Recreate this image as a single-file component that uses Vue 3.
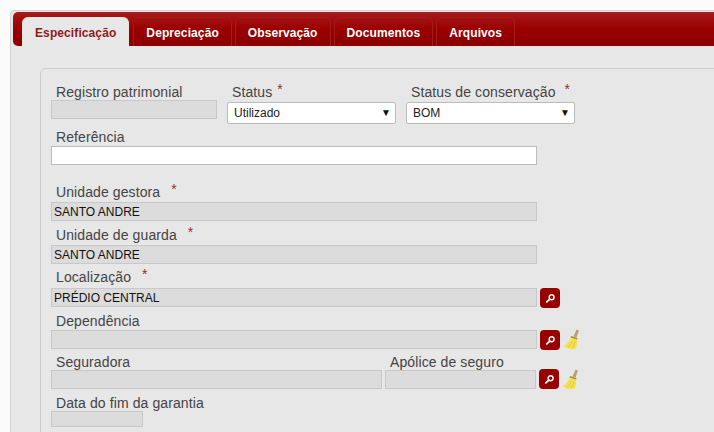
<script setup>
const tabs = ['Depreciação', 'Observação', 'Documentos', 'Arquivos']
</script>

<template>
  <div class="page">
    <div class="panel">
      <ul class="tabbar">
        <li class="tab active">Especificação</li>
        <li v-for="t in tabs" :key="t" class="tab">{{ t }}</li>
      </ul>

      <div class="form">
        <div class="row first">
          <div class="field f-reg">
            <label>Registro patrimonial</label>
            <div class="ro reg"></div>
          </div>
          <div class="field f-status">
            <label>Status <i class="near">*</i></label>
            <div class="sel">Utilizado<b>▼</b></div>
          </div>
          <div class="field f-cons">
            <label>Status de conservação <i class="mid">*</i></label>
            <div class="sel">BOM<b>▼</b></div>
          </div>
        </div>

        <div class="field f-ref">
          <label>Referência</label>
          <div class="txt"></div>
        </div>

        <div class="field f-ug">
          <label>Unidade gestora <i>*</i></label>
          <div class="ro long">SANTO ANDRE</div>
        </div>
        <div class="field f-ug2">
          <label>Unidade de guarda <i>*</i></label>
          <div class="ro long">SANTO ANDRE</div>
        </div>
        <div class="field f-loc">
          <label>Localização <i>*</i></label>
          <div class="line">
            <div class="ro long">PRÉDIO CENTRAL</div>
            <button class="search">
              <svg viewBox="0 0 12 12" width="11" height="11"><circle cx="7.2" cy="4.6" r="2.7" fill="none" stroke="#fff" stroke-width="1.5"/><path d="M5.2 6.6 2 9.6" stroke="#fff" stroke-width="2" stroke-linecap="round"/></svg>
            </button>
          </div>
        </div>
        <div class="field f-dep">
          <label>Dependência</label>
          <div class="line">
            <div class="ro long">&nbsp;</div>
            <button class="search">
              <svg viewBox="0 0 12 12" width="11" height="11"><circle cx="7.2" cy="4.6" r="2.7" fill="none" stroke="#fff" stroke-width="1.5"/><path d="M5.2 6.6 2 9.6" stroke="#fff" stroke-width="2" stroke-linecap="round"/></svg>
            </button>
            <svg class="broom" viewBox="0 0 18 20" width="18" height="20">
              <path d="M13.500 .5 16 1.500 13.500 8.500 10.500 7.500Z" fill="#b9a270"/>
              <path d="M8 8 14 9.500C14.500 13 14 17 12.500 20 8 20.500 3 19.500 .5 17 4 15.500 6.500 12 8 8Z" fill="#f5e04f"/>
              <path d="M8 7 14.500 9 14 10.500 7.500 8.500Z" fill="#a8923c"/>
              <path d="M9 12C8 15 6.500 17.500 5 18.500M12 12C11.500 15 10.500 17.500 9 19.500" stroke="#dcc032" stroke-width=".7" fill="none"/>
            </svg>
          </div>
        </div>
        <div class="line f-seg">
          <div class="field">
            <label>Seguradora</label>
            <div class="ro seg">&nbsp;</div>
          </div>
          <div class="field f-apo">
            <label>Apólice de seguro</label>
            <div class="ro apo">&nbsp;</div>
          </div>
          <button class="search">
            <svg viewBox="0 0 12 12" width="11" height="11"><circle cx="7.2" cy="4.6" r="2.7" fill="none" stroke="#fff" stroke-width="1.5"/><path d="M5.2 6.6 2 9.6" stroke="#fff" stroke-width="2" stroke-linecap="round"/></svg>
          </button>
          <svg class="broom" viewBox="0 0 18 20" width="18" height="20">
            <path d="M13.500 .5 16 1.500 13.500 8.500 10.500 7.500Z" fill="#b9a270"/>
            <path d="M8 8 14 9.500C14.500 13 14 17 12.500 20 8 20.500 3 19.500 .5 17 4 15.500 6.500 12 8 8Z" fill="#f5e04f"/>
            <path d="M8 7 14.500 9 14 10.500 7.500 8.500Z" fill="#a8923c"/>
            <path d="M9 12C8 15 6.500 17.500 5 18.500M12 12C11.500 15 10.500 17.500 9 19.500" stroke="#dcc032" stroke-width=".7" fill="none"/>
          </svg>
        </div>
        <div class="field f-data">
          <label>Data do fim da garantia</label>
          <div class="ro date"></div>
        </div>
      </div>
    </div>
  </div>
</template>

<style>
html, body { margin: 0; overflow: hidden; background: #fbfbfb; }
</style>

<style scoped>
.page {
  width: 714px;
  height: 432px;
  overflow: hidden;
  padding: 10px 0 0 10px;
  box-sizing: border-box;
  font-family: "Liberation Sans", Arial, sans-serif;
}
.panel {
  width: 720px;
  height: 440px;
  box-sizing: border-box;
  background: #e7e7e7;
  border: 1px solid #d2d2d2;
  border-radius: 4px 0 0 0;
  padding: 1px 0 0 2px;
}
.tabbar {
  display: flex;
  list-style: none;
  margin: 0;
  padding: 5px 0 0 9px;
  height: 29px;
  gap: 3px;
  background: linear-gradient(#a81a1a, #9a0000 50%, #8c0000);
  border-radius: 5px 5px 0 5px;
}
.tab {
  box-sizing: border-box;
  height: 29px;
  padding: 8px 12px 0;
  font-size: 12px;
  line-height: 14px;
  font-weight: bold;
  letter-spacing: 0.1px;
  color: #fff;
  border: 1px solid #a51a1a;
  border-bottom: none;
  border-radius: 6px 6px 0 0;
}
.tab.active {
  background: #e7e7e7;
  color: #8f1a1a;
  border-color: #e7e7e7;
  margin-right: 1px;
}
.form {
  box-sizing: border-box;
  margin: 22px 0 0 27px;
  width: 700px;
  height: 400px;
  border: 1px solid #cccccc;
  border-radius: 6px 0 0 0;
  padding: 15px 0 0 10px;
}
.row { display: flex; align-items: flex-end; }
.line { display: flex; align-items: flex-start; }
.f-seg { align-items: flex-end; }
.field label {
  display: block;
  padding-left: 5px;
  font-size: 14px;
  line-height: 16px;
  letter-spacing: 0.1px;
  color: #444;
}
.field label i {
  color: #9b2b2b;
  font-style: normal;
  position: relative;
  top: -3px;
  margin-left: 7px;
}
.field label i.near { margin-left: 1px; }
.field label i.mid { margin-left: 5px; }
.ro {
  box-sizing: border-box;
  height: 19px;
  padding-left: 2px;
  background: #dcdcdc;
  border: 1px solid #c8c8c8;
  font-size: 12px;
  line-height: 18px;
  color: #111;
}
.reg { width: 166px; }
.f-status, .f-cons { margin-left: 10px; }
.f-status label, .f-cons label { padding-bottom: 2px; }
.sel {
  box-sizing: border-box;
  position: relative;
  width: 169px;
  height: 22px;
  padding-left: 6px;
  margin-bottom: -5px;
  background: #fff;
  border: 1px solid #bbb;
  border-radius: 2px;
  font-size: 12px;
  line-height: 20px;
  color: #222;
}
.sel b {
  position: absolute;
  right: 4px;
  top: 0;
  font-size: 10px;
  font-weight: normal;
  color: #111;
}
.txt {
  box-sizing: border-box;
  width: 486px;
  height: 19px;
  margin-top: 1px;
  background: #fff;
  border: 1px solid #bbb;
}
.long { width: 486px; }
.f-ref { margin-top: 10px; }
.f-ug { margin-top: 19px; }
.f-ug .ro { margin-top: 2px; }
.f-ug2 { margin-top: 6px; }
.f-ug2 .ro { margin-top: 2px; }
.f-loc { margin-top: 5px; }
.f-loc .ro, .f-loc .search { margin-top: 3px; }
.f-dep { margin-top: 5px; }
.f-dep .line { margin-top: 1px; }
.f-seg { margin-top: 4px; }
.f-data { margin-top: 6px; }
.search {
  box-sizing: border-box;
  width: 20px;
  height: 20px;
  padding: 0;
  margin-left: 3px;
  background: #990000;
  border: none;
  border-radius: 4px;
  display: flex;
  align-items: center;
  justify-content: center;
}
.broom { margin: -1px 0 0 3px; }
.seg { width: 331px; }
.f-apo { margin-left: 3px; }
.apo { width: 151px; }
.date { width: 92px; height: 16px; }
</style>
